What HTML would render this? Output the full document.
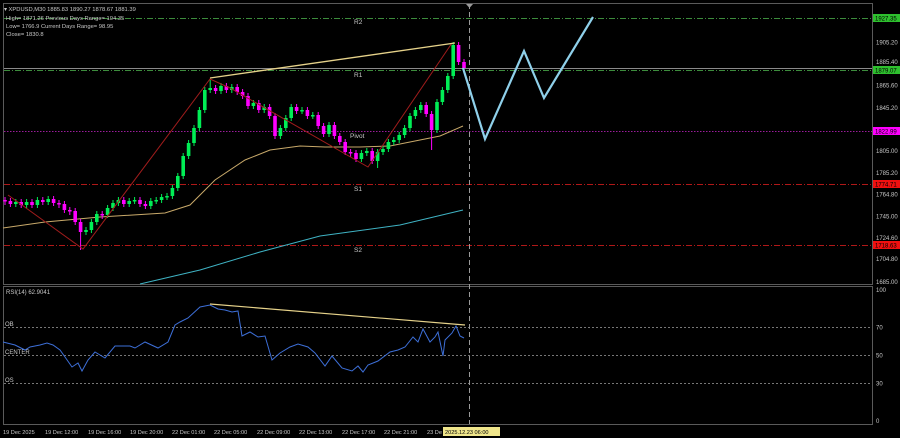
<!DOCTYPE html>
<html><head><meta charset="utf-8"><style>
html,body{margin:0;padding:0;background:#000;width:900px;height:438px;overflow:hidden}
svg{display:block}
text{font-family:"Liberation Sans",sans-serif;font-size:6.5px;fill:#c8c8c8}
</style></head><body>
<svg width="900" height="438" viewBox="0 0 900 438" xmlns="http://www.w3.org/2000/svg">
<rect width="900" height="438" fill="#000"/>
<rect x="3.5" y="3.5" width="869" height="281" fill="none" stroke="#5a5a5a" stroke-width="1"/>
<rect x="3.5" y="286.5" width="869" height="138" fill="none" stroke="#5a5a5a" stroke-width="1"/>
<g stroke-width="1" fill="none">
<line x1="4" y1="18.5" x2="872" y2="18.5" stroke="#3c8c3c" stroke-dasharray="6,2,1,2"/>
<line x1="4" y1="70.5" x2="872" y2="70.5" stroke="#3c8c3c" stroke-dasharray="6,2,1,2"/>
<line x1="4" y1="68.5" x2="872" y2="68.5" stroke="#8a8a8a"/>
<line x1="4" y1="131.5" x2="872" y2="131.5" stroke="#9a1c9a" stroke-dasharray="1.5,1.5"/>
<line x1="4" y1="184.5" x2="872" y2="184.5" stroke="#b01818" stroke-dasharray="6,2,1,2"/>
<line x1="4" y1="245.5" x2="872" y2="245.5" stroke="#b01818" stroke-dasharray="6,2,1,2"/>
<line x1="4" y1="327.5" x2="872" y2="327.5" stroke="#777" stroke-dasharray="2,2"/>
<line x1="4" y1="355.5" x2="872" y2="355.5" stroke="#777" stroke-dasharray="2,2"/>
<line x1="4" y1="383.5" x2="872" y2="383.5" stroke="#777" stroke-dasharray="2,2"/>
<line x1="469.5" y1="4" x2="469.5" y2="424" stroke="#9a9a9a" stroke-dasharray="5,3"/>
</g>
<polygon points="466,4 473,4 469.5,8" fill="#9a9a9a"/>
<polyline fill="none" stroke="#c8a96a" stroke-width="1" points="3,228 45,222 100,217 165,213 190,205 215,180 245,160 270,150 300,146 325,147 360,147 390,146 420,140 440,136 463,126"/>
<polyline fill="none" stroke="#3fb3c4" stroke-width="1" points="140,284 200,270 260,252 320,236 400,225 463,210"/>
<!-- green candles -->
<path fill="none" stroke="#00ee55" stroke-width="1" d="M15.8 199V207M26.6 199V208M37.4 197V208M48.2 196V205M86 227V235M91.4 219V233M96.8 211V225M107.6 205V218M113 200V211M118.4 197V206M129.2 198V207M134.6 197V204M150.8 198V209M156.2 197V204M161.6 194V203M167 193V200M172.4 185V199M177.8 173V191M183.2 153V179M188.6 140V159M194 125V146M199.4 107V131M204.8 87V113M210.2 80V93M221 83V94M231.8 84V93M253.4 100V109M264.2 104V113M280.4 125V139M285.8 115V131M291.2 104V121M302 107V114M312.8 112V119M329 122V137M361.4 150V162M366.8 148V156M377.6 149V168M383 146V155M388.4 139V152M393.8 137V145M399.2 132V143M404.6 125V138M410 113V131M415.4 107V119M420.8 102V113M437 99V133M442.4 87V105M447.8 73V93M453.2 42V79"/>
<path fill="none" stroke="#00ee55" stroke-width="3.6" d="M15.8 202V204M26.6 202V205M37.4 200V205M48.2 199V202M86 230V232M91.4 222V230M96.8 214V222M107.6 208V215M113 203V208M118.4 200V203M129.2 201V204M134.6 200V201.5M150.8 201V206M156.2 200V201.5M161.6 197V200M167 196V197.5M172.4 188V196M177.8 176V188M183.2 156V176M188.6 143V156M194 128V143M199.4 110V128M204.8 90V110M210.2 88V90M221 86V91M231.8 87V90M253.4 103V106M264.2 107V110M280.4 128V136M285.8 118V128M291.2 107V118M302 110V111.5M312.8 115V116.5M329 125V134M361.4 153V159M366.8 151V153M377.6 152V161M383 149V152M388.4 142V149M393.8 140V142M399.2 135V140M404.6 128V135M410 116V128M415.4 110V116M420.8 105V110M437 102V130M442.4 90V102M447.8 76V90M453.2 45V76"/>
<!-- magenta candles -->
<path fill="none" stroke="#ff00ff" stroke-width="1" d="M5 197V205M10.4 198V207M21.2 199V208M32 199V208M42.8 197V205M53.6 196V206M59 200V208M64.4 201V213M69.8 207V215M75.2 208V225M80.6 219V250M102.2 211V219M123.8 197V207M140 197V207M145.4 201V209M215.6 85V94M226.4 83V93M237.2 84V95M242.6 89V99M248 93V109M258.8 100V113M269.6 104V119M275 113V139M296.6 104V114M307.4 107V119M318.2 112V129M323.6 123V137M334.4 122V139M339.8 133V145M345.2 139V155M350.6 149V157M356 150V162M372.2 148V164M426.2 102V117M431.6 111V150M458.6 42V65M464 59V71"/>
<path fill="none" stroke="#ff00ff" stroke-width="3.6" d="M5 200V201.5M10.4 201V204M21.2 202V205M32 202V205M42.8 200V202M53.6 199V203M59 203V204.5M64.4 204V210M69.8 210V211.5M75.2 211V222M80.6 222V232M102.2 214V215.5M123.8 200V204M140 200V204M145.4 204V206M215.6 88V91M226.4 86V90M237.2 87V92M242.6 92V96M248 96V106M258.8 103V110M269.6 107V116M275 116V136M296.6 107V111M307.4 110V116M318.2 115V126M323.6 126V134M334.4 125V136M339.8 136V142M345.2 142V152M350.6 152V153.5M356 153V159M372.2 151V161M426.2 105V114M431.6 114V130M458.6 45V62M464 62V68"/>
<polyline fill="none" stroke="#a01c1c" stroke-width="1" points="8,195 83,249 210,79 230,88 368,167 452,43"/>
<line x1="210" y1="78" x2="455" y2="43" stroke="#e6d28a" stroke-width="1.3"/>
<polyline fill="none" stroke="#8fd0ea" stroke-width="2.2" points="463,68 485,139 524,51 544,98 593,17"/>
<text x="354" y="24">R2</text><text x="354" y="77">R1</text><text x="350" y="138">Pivot</text><text x="354" y="191">S1</text><text x="354" y="252">S2</text>
<text x="4" y="11" style="font-size:5.8px">▾ XPDUSD,M30  1885.83 1890.27 1878.67 1881.39</text>
<text x="6" y="20" style="font-size:5.8px">High= 1871.26   Previous Days Range= 104.35</text>
<text x="6" y="28" style="font-size:5.8px">Low= 1766.9    Current Days Range= 98.95</text>
<text x="6" y="36" style="font-size:5.8px">Close= 1830.8</text>
<g>
<rect x="873" y="14" width="27" height="8" fill="#2ec02e"/><text x="875" y="20.5" style="fill:#000;font-size:6px">1927.35</text>
<text x="876" y="44.5" style="font-size:6px">1905.20</text><text x="876" y="64" style="font-size:6px">1885.40</text>
<rect x="873" y="66" width="27" height="8" fill="#2ec02e"/><text x="875" y="72.5" style="fill:#000;font-size:6px">1879.07</text>
<text x="876" y="87.5" style="font-size:6px">1865.60</text><text x="876" y="110" style="font-size:6px">1845.20</text>
<rect x="873" y="127" width="27" height="8" fill="#ff00ff"/><text x="875" y="133.5" style="fill:#000;font-size:6px">1822.99</text>
<text x="876" y="153" style="font-size:6px">1805.00</text><text x="876" y="175" style="font-size:6px">1785.20</text>
<rect x="873" y="180" width="27" height="8" fill="#f01010"/><text x="875" y="186.5" style="fill:#000;font-size:6px">1774.71</text>
<text x="876" y="196.5" style="font-size:6px">1764.80</text><text x="876" y="218.5" style="font-size:6px">1745.00</text><text x="876" y="240" style="font-size:6px">1724.60</text>
<rect x="873" y="241" width="27" height="8" fill="#f01010"/><text x="875" y="247.5" style="fill:#000;font-size:6px">1718.63</text>
<text x="876" y="261" style="font-size:6px">1704.80</text><text x="876" y="284" style="font-size:6px">1685.00</text>
<text x="876" y="292" style="font-size:6px">100</text><text x="876" y="329.5" style="font-size:6px">70</text><text x="876" y="357.5" style="font-size:6px">50</text><text x="876" y="385.5" style="font-size:6px">30</text><text x="876" y="423" style="font-size:6px">0</text>
</g>
<text x="6" y="294" style="font-size:6px">RSI(14) 62.9041</text>
<text x="5" y="326" style="font-size:6px">OB</text><text x="5" y="354" style="font-size:6px">CENTER</text><text x="5" y="382" style="font-size:6px">OS</text>
<polyline fill="none" stroke="#3d6fd8" stroke-width="1" points="3,342 15,345 25,350 30,347 40,345 47,343 53,345 60,350 65,357 72,367 78,363 82,371 88,360 95,352 105,358 115,346 130,346 135,348 145,342 158,348 168,342 175,325 180,322 188,318 200,307 210,305 218,309 225,310 232,312 238,311 242,336 250,332 258,337 265,336 272,360 280,353 290,347 298,344 308,347 315,353 325,366 332,356 342,368 352,371 358,366 363,372 368,365 378,361 390,352 398,350 405,347 413,337 418,342 423,329 430,342 435,337 438,332 443,356 445,340 452,333 456,326 460,336 464,338"/>
<line x1="210" y1="304" x2="465" y2="325" stroke="#e6d28a" stroke-width="1.2"/>
<g>
<text x="3" y="434" style="font-size:5.6px">19 Dec 2025</text><text x="45" y="434" style="font-size:5.6px">19 Dec 12:00</text><text x="88" y="434" style="font-size:5.6px">19 Dec 16:00</text><text x="130" y="434" style="font-size:5.6px">19 Dec 20:00</text><text x="172" y="434" style="font-size:5.6px">22 Dec 01:00</text><text x="214" y="434" style="font-size:5.6px">22 Dec 05:00</text><text x="257" y="434" style="font-size:5.6px">22 Dec 09:00</text><text x="299" y="434" style="font-size:5.6px">22 Dec 13:00</text><text x="342" y="434" style="font-size:5.6px">22 Dec 17:00</text><text x="384" y="434" style="font-size:5.6px">22 Dec 21:00</text><text x="427" y="434" style="font-size:5.6px">23 De</text>
</g>
<rect x="443" y="427" width="57" height="9" fill="#f0e68c"/><text x="445" y="434" style="fill:#000;font-size:5.6px">2025.12.23 06:00</text>
</svg>
</body></html>
